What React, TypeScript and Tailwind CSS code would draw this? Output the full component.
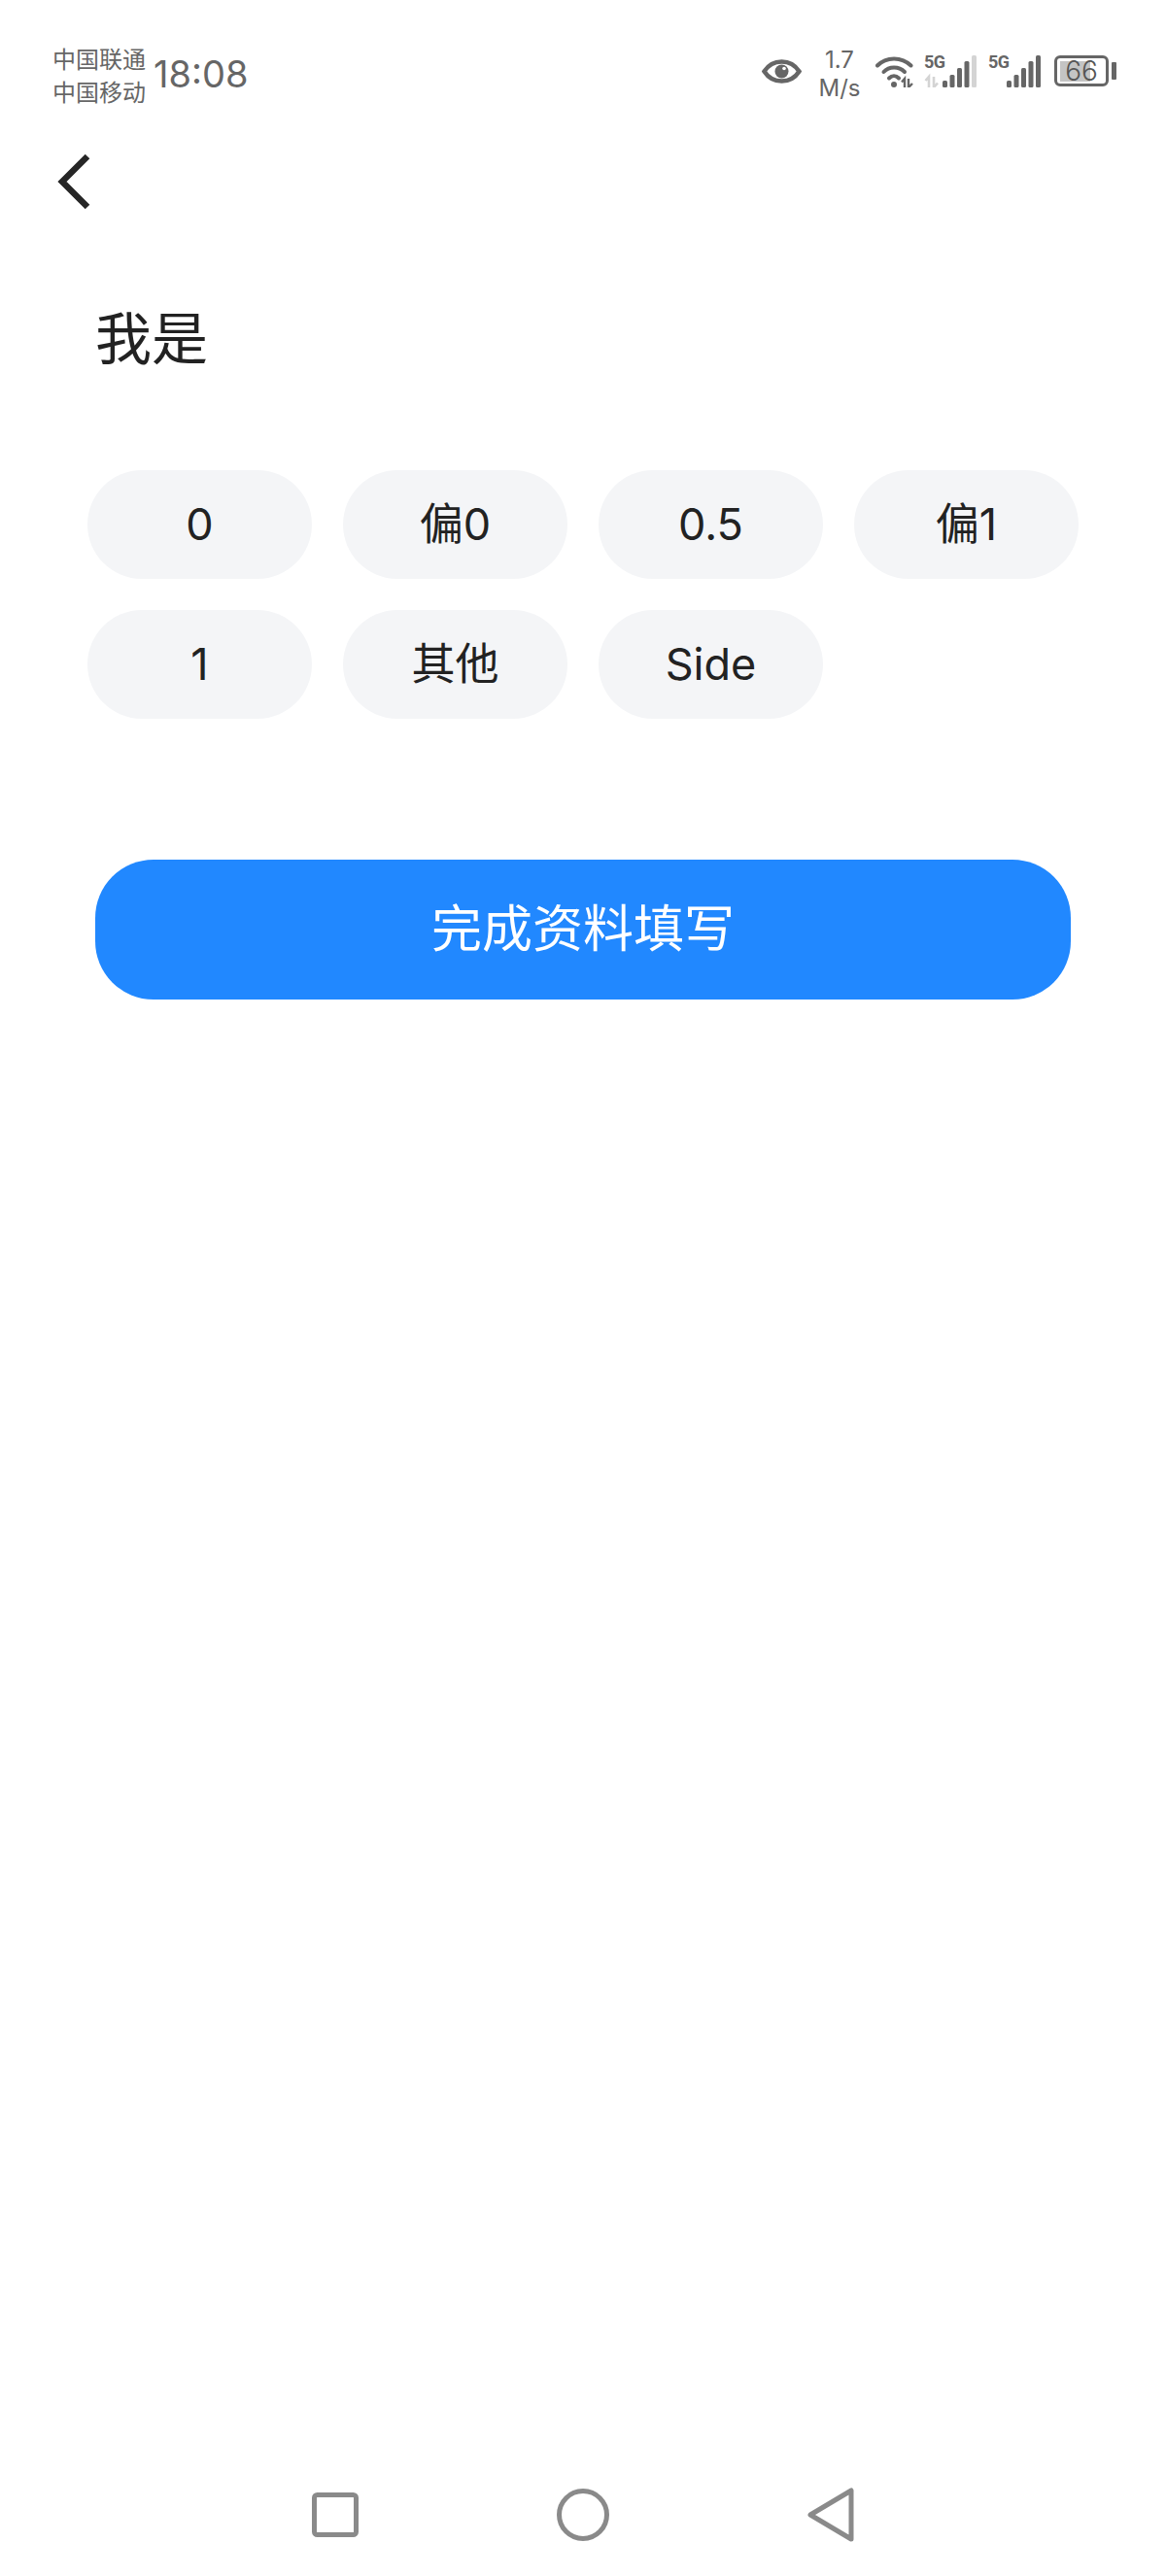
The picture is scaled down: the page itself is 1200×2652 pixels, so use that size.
import React from "react";

const options = ["0", "偏0", "0.5", "偏1", "1", "其他", "Side"];

const SignalBars = ({ faded }: { faded?: boolean }) => (
  <svg width="35" height="33" viewBox="0 0 35 33" className="block">
    <rect x="0" y="26" width="5" height="7" rx="1.500" fill="#666" />
    <rect x="7.500" y="20" width="5" height="13" rx="1.500" fill="#666" />
    <rect x="15" y="13" width="5" height="20" rx="1.500" fill="#666" />
    <rect x="22.500" y="6" width="5" height="27" rx="1.500" fill="#666" />
    <rect x="30" y="0" width="5" height="33" rx="1.500" fill={faded ? "#d4d4d4" : "#666"} />
  </svg>
);

const FiveG = () => (
  <span className="absolute left-0 top-[-3px] font-['Roboto',sans-serif] text-[18px] font-bold leading-[20px] tracking-[-0.5px]">
    5G
  </span>
);

const StatusBar = () => (
  <div className="flex h-[113px] items-end justify-between pl-[54px] pr-[51px] text-[#666666]">
    <div className="flex items-center gap-[8px]">
      <div className="text-[24px] leading-[34px]">
        <div>中国联通</div>
        <div>中国移动</div>
      </div>
      <span className="mb-[7px] text-[38px] leading-none">18:08</span>
    </div>
    <div className="mb-[8px] flex items-center">
      {/* eye */}
      <svg width="41" height="25" viewBox="0 0 41 25" className="mr-[17px]">
        <path
          d="M2.500 12.500C7 5.500 13 2.500 20.500 2.500S34 5.500 38.500 12.500C34 19.500 28 22.500 20.500 22.500S7 19.500 2.500 12.500Z"
          fill="none"
          stroke="#666"
          strokeWidth="4.500"
        />
        <circle cx="20.500" cy="12.500" r="7" fill="#666" />
        <circle cx="23" cy="9.500" r="1.800" fill="#fff" />
      </svg>
      <div className="mr-[15px] mt-[6px] w-[44px] text-center text-[24px] leading-[29px]">
        <div>1.7</div>
        <div>M/s</div>
      </div>
      {/* wifi */}
      <svg width="40" height="33" viewBox="0 0 40 33" className="mr-[10px]">
        <path d="M2 10.500C11 1 27 1 36.500 10.500" fill="none" stroke="#666" strokeWidth="4" strokeLinecap="round" />
        <path d="M8.500 17C14 11 24 11 30 17" fill="none" stroke="#666" strokeWidth="4" strokeLinecap="round" />
        <path d="M14 23.500C17 20.500 21 20.500 24 23.500" fill="none" stroke="#666" strokeWidth="4" strokeLinecap="round" />
        <circle cx="19" cy="30" r="3" fill="#666" />
        <path d="M30 33V24L27 27.500M34 24V33L38 29" fill="none" stroke="#666" strokeWidth="2.400" />
      </svg>
      <div className="relative mr-[12px] flex items-end">
        <FiveG />
        <svg width="19" height="33" viewBox="0 0 19 33">
          <path d="M5 33V22L1.500 26M10 22V33L14 28.500" fill="none" stroke="#d4d4d4" strokeWidth="2.600" />
        </svg>
        <SignalBars faded />
      </div>
      <div className="relative mr-[14px] flex items-end">
        <FiveG />
        <div className="w-[19px]" />
        <SignalBars />
      </div>
      <div className="flex items-center gap-[3px]">
        <div className="relative flex h-[32px] w-[56px] items-center rounded-[6px] border-[3px] border-[#666666] px-[3px]">
          <div className="h-[21px] w-[31px] bg-[#c4c4c4]" />
          <span className="absolute inset-0 flex items-center justify-center text-[28px] font-light leading-none text-[#555555]">
            66
          </span>
        </div>
        <div className="h-[18px] w-[5px] rounded-[1px] bg-[#666666]" />
      </div>
    </div>
  </div>
);

const NavBar = () => (
  <div className="mb-[34px] mt-auto flex items-center justify-center gap-[204px]">
    <svg width="48" height="46" viewBox="0 0 48 46">
      <rect x="2.500" y="2.500" width="43" height="41" rx="3" fill="none" stroke="#8a8a8a" strokeWidth="5" />
    </svg>
    <svg width="54" height="54" viewBox="0 0 54 54">
      <circle cx="27" cy="27" r="24.500" fill="none" stroke="#8a8a8a" strokeWidth="5" />
    </svg>
    <svg width="48" height="58" viewBox="0 0 48 58">
      <path d="M45 4V54L3 29Z" fill="none" stroke="#8a8a8a" strokeWidth="5" strokeLinejoin="round" />
    </svg>
  </div>
);

export default function App() {
  return (
    <div className="flex h-[2652px] w-[1200px] flex-col bg-white font-['Inter','Noto_Sans_CJK_SC',sans-serif]">
      <StatusBar />
      <div className="ml-[59px] mt-[45px]">
        <svg width="36" height="58" viewBox="0 0 36 58" className="block">
          <path d="M31 3L5 29L31 55" fill="none" stroke="#262626" strokeWidth="6.500" />
        </svg>
      </div>
      <h1 className="ml-[98px] mt-[93px] text-[58px] font-normal leading-[80px] text-[#222222]">我是</h1>
      <div className="ml-[90px] mt-[95px] grid w-[1020px] grid-cols-4 gap-x-[32px] gap-y-[32px]">
        {options.map((opt) => (
          <div
            key={opt}
            className="flex h-[112px] items-center justify-center rounded-[56px] bg-[#f4f5f7] text-[45px] text-[#222222]"
          >
            {opt}
          </div>
        ))}
      </div>
      <button className="ml-[98px] mt-[145px] flex h-[144px] w-[1004px] items-center justify-center rounded-[60px] bg-[#2188ff] text-[52px] text-white">
        完成资料填写
      </button>
      <NavBar />
    </div>
  );
}
